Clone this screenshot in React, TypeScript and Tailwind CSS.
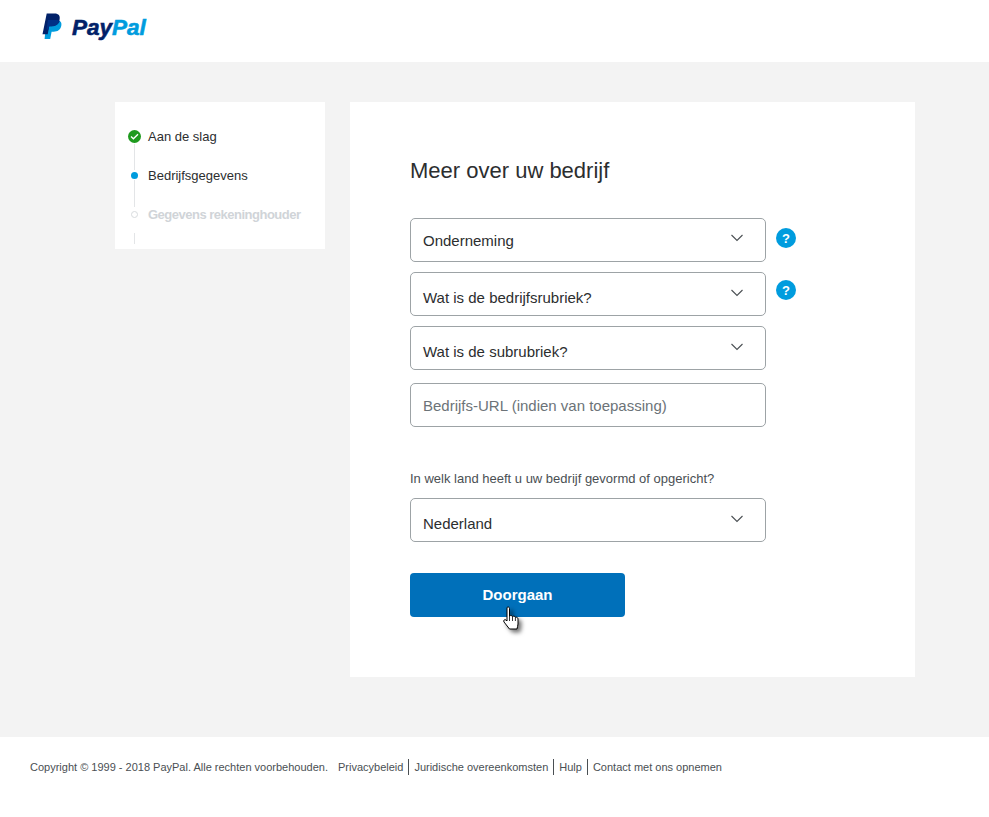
import React from "react";

const Chevron = () => (
  <svg width="14" height="8" viewBox="0 0 14 8" fill="none" className="shrink-0">
    <path d="M1.5 1 L7 6.5 L12.5 1" stroke="#4a4f53" strokeWidth="1.1" />
  </svg>
);

const Help = () => (
  <div className="flex h-[20px] w-[20px] shrink-0 items-center justify-center rounded-full bg-[#009cde] text-[13px] font-bold leading-none text-white">
    ?
  </div>
);

function Select({ label, mt, textPt, help, helpMt, chevronPb }: { label: string; mt: string; textPt: string; help?: boolean; helpMt?: string; chevronPb: string }) {
  return (
    <div className={`flex items-start ${mt}`}>
      <div className="flex h-[44px] w-[356px] items-center justify-between rounded-[5px] border border-[#9da3a6] bg-white pl-[12px] pr-[21px]">
        <span className={`text-[15px] leading-none text-[#2c2e2f] ${textPt}`}>{label}</span>
        <span className={chevronPb}>
          <Chevron />
        </span>
      </div>
      {help && (
        <div className={`ml-[10px] ${helpMt}`}>
          <Help />
        </div>
      )}
    </div>
  );
}

const PayPalLogo = () => (
  <div className="flex items-center">
    <svg width="24" height="27" viewBox="0 0 22 27" className="shrink-0">
      <path d="M4.5 7 H14 C18.5 7 20 9.5 19.3 12.8 C18.4 17 15.5 18.7 11.7 18.7 H9.6 L8.2 26 H2.6 Z" fill="#009cde" />
      <path d="M4.7 0.5 H12.6 C16.6 0.5 18.4 2.8 17.6 6.6 C16.7 11 13.6 13.3 9.6 13.3 H7.2 L5.7 21.2 H0.5 Z" fill="#012169" />
      <path d="M5.9 7 H14 C15.6 7 16.9 7.3 17.7 8 C16.7 11.4 13.6 13.3 9.6 13.3 H7.2 L6.6 16.5 H4.6 Z" fill="#003087" />
    </svg>
    <span className="ml-[7px] mt-[3px] text-[22.5px] font-bold italic leading-none text-[#012169] [-webkit-text-stroke:0.6px]">
      Pay<span className="text-[#009cde]">Pal</span>
    </span>
  </div>
);

export default function App() {
  return (
    <div className="flex min-h-[817px] flex-col bg-white font-['Liberation_Sans',Arial,sans-serif]">
      <header className="h-[62px] bg-white pl-[41px] pt-[13px]">
        <PayPalLogo />
      </header>

      <main className="flex h-[675px] items-start gap-[25px] bg-[#f3f3f3] pl-[115px] pt-[40px]">
        <aside className="h-[147px] w-[210px] bg-white pl-[13px] pt-[27px]">
          <div className="flex h-[15px] items-center">
            <div className="flex h-[13px] w-[13px] items-center justify-center rounded-full bg-[#1e9a1e]">
              <svg width="9" height="7" viewBox="0 0 9 7" fill="none">
                <path d="M1 3.5 L3.4 5.8 L8 1.2" stroke="white" strokeWidth="1.3" />
              </svg>
            </div>
            <span className="ml-[7px] text-[13px] leading-none text-[#2c2e2f]">Aan de slag</span>
          </div>
          <div className="ml-[6px] h-[26px] w-px bg-[#e3e5e7]" />
          <div className="flex h-[10px] items-center">
            <div className="ml-[3px] h-[7px] w-[7px] rounded-full bg-[#009cde]" />
            <span className="ml-[10px] text-[13px] leading-none text-[#2c2e2f]">Bedrijfsgegevens</span>
          </div>
          <div className="ml-[6px] mb-[2px] h-[27px] w-px bg-[#e3e5e7]" />
          <div className="flex h-[10px] items-center">
            <div className="ml-[3px] h-[7px] w-[7px] rounded-full border border-[#d8dbde] bg-white" />
            <span className="ml-[10px] text-[13px] font-bold leading-none tracking-[-0.5px] text-[#d0d4d8]">Gegevens rekeninghouder</span>
          </div>
          <div className="ml-[6px] mt-[14px] h-[11px] w-px bg-[#e3e5e7]" />
        </aside>

        <section className="h-[575px] w-[565px] bg-white pl-[60px] pt-[55px]">
          <h1 className="text-[22px] font-normal leading-[28px] text-[#2c2e2f]">Meer over uw bedrijf</h1>

          <Select label="Onderneming" mt="mt-[33px]" textPt="pt-[1px]" help helpMt="mt-[10px]" chevronPb="pb-[4px]" />
          <Select label="Wat is de bedrijfsrubriek?" mt="mt-[10px]" textPt="pt-[7px]" help helpMt="mt-[8px]" chevronPb="pb-[2px]" />
          <Select label="Wat is de subrubriek?" mt="mt-[10px]" textPt="pt-[7px]" chevronPb="pb-[2px]" />

          <div className="mt-[13px] flex h-[44px] w-[356px] items-center rounded-[5px] border border-[#9da3a6] bg-white pl-[12px]">
            <span className="text-[15px] leading-none text-[#6c7378]">Bedrijfs-URL (indien van toepassing)</span>
          </div>

          <p className="mt-[44px] text-[13px] leading-[15px] text-[#4a4f53]">In welk land heeft u uw bedrijf gevormd of opgericht?</p>

          <Select label="Nederland" mt="mt-[12px]" textPt="pt-[7px]" chevronPb="pb-[2px]" />

          <div className="relative mt-[31px] flex h-[44px] w-[215px] items-center justify-center rounded-[4px] bg-[#0070ba] text-[15px] font-bold text-white">
            <span>Doorgaan</span>
            <svg width="24" height="30" viewBox="0 0 24 30" className="absolute left-[92px] top-[33px] drop-shadow-[3px_3px_2px_rgba(0,0,0,0.55)]">
              <path
                d="M5 1.5 C6 0.6 7.5 1 7.5 2.5 V10 C8.5 9.2 10 9.4 10.5 10.6 C11.5 9.8 13 10.2 13.4 11.3 C14.6 10.8 16 11.5 16 13 V18 C16 20 15.2 21 15 23 H7.5 L2 16 C1 14.5 2.5 13 4 14 L5 15 Z"
                fill="white"
                stroke="black"
                strokeWidth="1"
              />
              <path d="M7.5 10 V15 M10.5 10.6 V15 M13.4 11.3 V15" stroke="black" strokeWidth="0.8" />
            </svg>
          </div>
        </section>
      </main>

      <footer className="flex h-[80px] items-start bg-white pl-[30px] pt-[22px] text-[11px] leading-[16px] text-[#4a4f53]">
        <span>Copyright © 1999 - 2018 PayPal. Alle rechten voorbehouden.</span>
        <span className="ml-[10px] pr-[5px]">Privacybeleid</span>
        <span className="border-l border-[#4a4f53] px-[5px]">Juridische overeenkomsten</span>
        <span className="border-l border-[#4a4f53] px-[5px]">Hulp</span>
        <span className="border-l border-[#4a4f53] pl-[5px]">Contact met ons opnemen</span>
      </footer>
    </div>
  );
}
